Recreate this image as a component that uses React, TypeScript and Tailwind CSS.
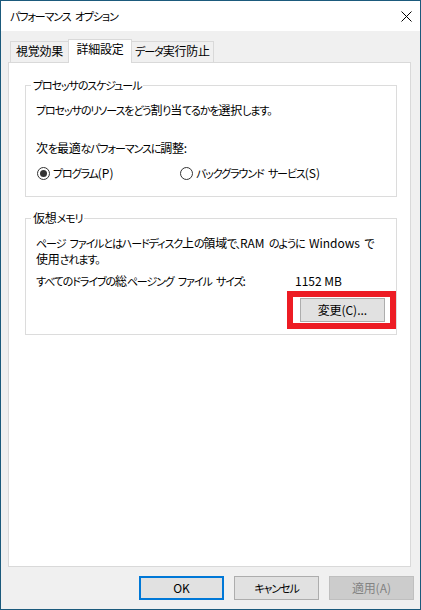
import React from 'react'

// Meiryo UI-ish widths: kanji full, kana narrow, latin normal
const J = ({ t }: { t: string }) => {
  const runs = t.match(/[\u4e00-\u9fff々]+|[A-Za-z0-9().:]+(?: [A-Za-z0-9().:]+)*|[^\u4e00-\u9fff々A-Za-z0-9().:]+/g) || []
  return (
    <>
      {runs.map((r, i) => {
        if (/^[\u4e00-\u9fff々]/.test(r))
          return (
            <span key={i} className="text-[12px] tracking-[-0.2px]">
              {r}
            </span>
          )
        if (/^[A-Za-z0-9().:]/.test(r))
          return (
            <span key={i} className="text-[12px] tracking-normal [word-spacing:normal]">
              {r}
            </span>
          )
        return <React.Fragment key={i}>{r}</React.Fragment>
      })}
    </>
  )
}

const Radio = ({ checked, label }: { checked?: boolean; label: string }) => (
  <div className="flex items-center gap-[3px]">
    <span className="flex h-[13px] w-[13px] items-center justify-center rounded-full border border-[#333333] bg-white">
      {checked && <span className="h-[7px] w-[7px] rounded-full bg-[#333333]" />}
    </span>
    <span>
      <J t={label} />
    </span>
  </div>
)

const Button = ({ label, primary, disabled }: { label: string; primary?: boolean; disabled?: boolean }) => {
  let cls = 'border border-[#adadad] bg-[#e1e1e1] text-black'
  if (primary) cls = 'border-2 border-[#0078d7] bg-[#e1e1e1] text-black'
  if (disabled) cls = 'border border-[#bfbfbf] bg-[#cccccc] text-[#838383]'
  return (
    <div className={`flex h-[24px] w-[85px] items-center justify-center whitespace-nowrap leading-[16px] ${cls}`}>
      <J t={label} />
    </div>
  )
}

const App = () => {
  return (
    <div className="flex h-[610px] w-[421px] flex-col border border-[#1b5a7c] bg-[#f0f0f0] font-['Noto_Sans_CJK_JP','Noto_Sans',sans-serif] text-[11px] leading-[16px] tracking-[-1.1px] text-black [font-feature-settings:'palt'] [word-spacing:3px]">
      {/* title bar */}
      <div className="flex h-[30px] shrink-0 items-center justify-between bg-white pl-[9px] pr-[8px]">
        <span>
          <J t="パフォーマンス オプション" />
        </span>
        <svg width="11" height="11" viewBox="0 0 11 11" className="mt-[1px]">
          <path d="M0.5 0.5 L10.5 10.5 M10.5 0.5 L0.5 10.5" stroke="#000" strokeWidth="1" fill="none" />
        </svg>
      </div>

      <div className="flex flex-1 flex-col pl-[7px] pr-[9px] pt-[8px]">
        {/* tabs */}
        <div className="flex h-[23px] items-end whitespace-nowrap pl-[2px]">
          <div className="h-[21px] w-[58px] border-l border-t border-[#d9d9d9] bg-[#f0f0f0] pt-[1px] text-center">
            <J t="視覚効果" />
          </div>
          <div className="relative z-10 -mb-px h-[24px] w-[64px] border-l border-r border-t border-[#d9d9d9] bg-white pt-[1px] text-center">
            <J t="詳細設定" />
          </div>
          <div className="h-[21px] w-[82px] border-r border-t border-[#d9d9d9] bg-[#f0f0f0] pt-[1px] text-center">
            <J t="データ実行防止" />
          </div>
        </div>

        {/* panel */}
        <div className="flex h-[505px] flex-col border border-[#d9d9d9] bg-white pl-[16px] pr-[13px]">
          <fieldset className="mt-[14px] border border-[#dcdcdc]">
            <legend className="ml-[5px] px-[2px] leading-[16px]">
              <J t="プロセッサのスケジュール" />
            </legend>
            <div className="pb-[15px] pl-[10px] pt-[9px]">
              <p>
                <J t="プロセッサのリソースをどう割り当てるかを選択します。" />
              </p>
              <p className="mt-[22px]">
                <J t="次を最適なパフォーマンスに調整:" />
              </p>
              <div className="ml-[1px] mt-[9px] flex">
                <div className="w-[143px]">
                  <Radio checked label="プログラム(P)" />
                </div>
                <Radio label="バックグラウンド サービス(S)" />
              </div>
            </div>
          </fieldset>

          <fieldset className="mt-[13px] border border-[#dcdcdc]">
            <legend className="ml-[5px] px-[2px] leading-[16px]">
              <J t="仮想メモリ" />
            </legend>
            <div className="pb-[5px] pl-[10px] pt-[9px]">
              <p className="whitespace-nowrap leading-[15px]">
                <J t="ページ ファイルとはハードディスク上の領域で、RAM のように Windows で" />
                <br />
                <J t="使用されます。" />
              </p>
              <div className="mt-[6px] flex">
                <span className="w-[259px]">
                  <J t="すべてのドライブの総ページング ファイル サイズ:" />
                </span>
                <J t="1152 MB" />
              </div>
              <div className="mt-[2px] flex justify-end">
                <div className="border-[6px] border-[#ed1c24] py-[1px] pl-[7px] pr-[5px]">
                  <Button label="変更(C)..." />
                </div>
              </div>
            </div>
          </fieldset>
        </div>

        {/* bottom buttons */}
        <div className="-mr-[3px] flex justify-end gap-[10px] pb-[9px] pt-[9px]">
          <Button primary label="OK" />
          <Button label="キャンセル" />
          <Button disabled label="適用(A)" />
        </div>
      </div>
    </div>
  )
}

export default App
